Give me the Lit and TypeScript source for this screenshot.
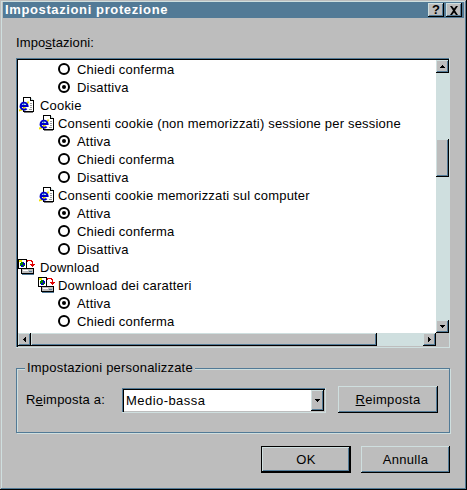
import { LitElement, html, css, svg } from "lit";
import { customElement } from "lit/decorators.js";

const ieIcon = svg`<svg class="ico" width="16" height="16" viewBox="0 0 16 16" shape-rendering="crispEdges">
  <path d="M5.500 .5H12.500L15.500 3.500V14.500H5.500Z" fill="#fff" stroke="#000"/>
  <path d="M12.500 .5V3.500H15.500" fill="#cfdfdf" stroke="#000"/>
  <path d="M12 6h2M12 8h2M12 10h2M11 12h3" stroke="#9a9a9a"/>
  <path d="M6 15.500H15" stroke="#7b7b7b"/>
  <g shape-rendering="auto">
    <path d="M1 13.500C3.500 13.500 8 10.500 10.500 4.500" fill="none" stroke="#f0e000" stroke-width="1.800"/>
    <path d="M3.200 9H9.600A3.500 3.500 0 1 0 8.600 11.600" fill="none" stroke="#0000c8" stroke-width="2"/>
    <path d="M4.500 7.200H7.500" stroke="#6fd0ff" stroke-width="1"/>
  </g>
</svg>`;

const dlIcon = svg`<svg class="ico dl" width="17" height="16" viewBox="0 0 17 16" shape-rendering="crispEdges">
  <rect x="0.500" y="0.500" width="8" height="9" fill="#fff" stroke="#000"/>
  <rect x="1" y="1" width="3" height="2" fill="#f0f000"/>
  <path d="M3 3h3v1h1v3H6v1H3V7H2V4h1z" fill="#008000"/>
  <path d="M5 3h1v1h1v2H5zM3 6h2v2H3z" fill="#0000c8"/>
  <path d="M9.500 3V1.500H13.500V2.500H14.500V5" fill="none" stroke="#e00000"/>
  <path d="M12 5h5v1h-1v1h-1v1h-1V7h-1V6h-1z" fill="#e00000"/>
  <rect x="3.500" y="9.500" width="12" height="5" fill="#bdbdbd" stroke="#000"/>
  <path d="M5 11h5v1H5z" fill="#fff"/>
  <path d="M11 12h3v1h-3z" fill="#527a96"/>
  <path d="M4 15h12v1H4z" fill="#527a96"/>
</svg>`;

type Row = { kind: "radio" | "ie" | "dl"; level: number; text: string; on?: boolean };
const rows: Row[] = [
  { kind: "radio", level: 2, text: "Chiedi conferma" },
  { kind: "radio", level: 2, text: "Disattiva", on: true },
  { kind: "ie", level: 0, text: "Cookie" },
  { kind: "ie", level: 1, text: "Consenti cookie (non memorizzati) sessione per sessione" },
  { kind: "radio", level: 2, text: "Attiva", on: true },
  { kind: "radio", level: 2, text: "Chiedi conferma" },
  { kind: "radio", level: 2, text: "Disattiva" },
  { kind: "ie", level: 1, text: "Consenti cookie memorizzati sul computer" },
  { kind: "radio", level: 2, text: "Attiva", on: true },
  { kind: "radio", level: 2, text: "Chiedi conferma" },
  { kind: "radio", level: 2, text: "Disattiva" },
  { kind: "dl", level: 0, text: "Download" },
  { kind: "dl", level: 1, text: "Download dei caratteri" },
  { kind: "radio", level: 2, text: "Attiva", on: true },
  { kind: "radio", level: 2, text: "Chiedi conferma" },
];

const arrow = (d: string) => svg`<svg width="5" height="5" viewBox="0 0 5 5"><path d=${d} fill="#000" shape-rendering="crispEdges"/></svg>`;
const UP = "M2 1h1v1h1v1h1v1H0V3h1V2h1z";
const DOWN = "M0 1h5v1H4v1H3v1H2V3H1V2H0z";
const LEFT = "M3 0h1v5H3V4H2V3H1V2h1V1h1z";
const RIGHT = "M1 0h1v1h1v1h1v1H3v1H2v1H1z";

@customElement("app-root")
export class AppRoot extends LitElement {
  static styles = css`
    :host {
      display: block;
      width: 467px;
      height: 490px;
      font-family: "Liberation Sans", Arial, sans-serif;
      font-size: 13px;
      color: #000;
    }
    .window {
      box-sizing: border-box;
      width: 467px;
      height: 490px;
      padding: 2px;
      background: #bdbdbd;
      display: flex;
      flex-direction: column;
      box-shadow: inset -1px -1px #000, inset 1px 1px #bdbdbd, inset -2px -2px #527a96, inset 2px 2px #cfdfdf;
    }
    .title {
      height: 16px;
      flex: none;
      margin: 0 1px;
      background: #527a96;
      display: flex;
      align-items: center;
      padding: 0 2px;
      gap: 2px;
    }
    .title b {
      flex: 1;
      color: #fff;
      font-size: 13px;
      letter-spacing: 0.62px;
      line-height: 16px;
    }
    .tbtn {
      box-sizing: border-box;
      width: 16px;
      height: 14px;
      background: #bdbdbd;
      box-shadow: inset -1px -1px #000, inset 1px 1px #cfdfdf, inset -2px -2px #527a96;
      display: flex;
      align-items: center;
      justify-content: center;
      font-weight: bold;
      font-size: 13px;
      line-height: 14px;
    }
    .body {
      flex: 1;
      display: flex;
      flex-direction: column;
      padding: 0 15px 0 14px;
    }
    .lbl {
      margin-top: 17px;
      height: 23px;
      line-height: 16px;
      flex: none;
      letter-spacing: 0.1px;
    }
    u { text-decoration: underline; text-underline-offset: 1px; }
    .list {
      box-sizing: border-box;
      height: 290px;
      flex: none;
      padding: 2px 1px 2px 2px;
      display: grid;
      grid-template-columns: 1fr 13px;
      grid-template-rows: 273px 13px;
      background: #bdbdbd;
      box-shadow: inset -1px -1px #cfdfdf, inset 1px 1px #527a96, inset 2px 2px #000;
    }
    .rows {
      background: #fff;
      overflow: hidden;
      min-width: 0;
    }
    .row {
      height: 18px;
      display: flex;
      align-items: center;
      white-space: nowrap;
      letter-spacing: 0.19px;
    }
    .l0 { padding-left: 0; gap: 6px; }
    .l1 { padding-left: 20px; gap: 4px; }
    .l2 { padding-left: 40px; gap: 7px; }
    .ico { flex: none; }
    .dl { margin-right: -1px; }
    .radio {
      box-sizing: border-box;
      flex: none;
      width: 12px;
      height: 12px;
      border: 2px solid #000;
      border-radius: 50%;
      background: #fff;
      display: flex;
      align-items: center;
      justify-content: center;
    }
    .radio.on::after {
      content: "";
      width: 4px;
      height: 4px;
      border-radius: 50%;
      background: #000;
    }
    .vbar {
      background: #cfdfdf;
      display: flex;
      flex-direction: column;
      justify-content: space-between;
      position: relative;
    }
    .sb {
      box-sizing: border-box;
      flex: none;
      background: #bdbdbd;
      box-shadow: inset -1px -1px #000, inset 1px 1px #cfdfdf, inset -2px -2px #527a96;
      display: flex;
      align-items: center;
      justify-content: center;
    }
    .sq { width: 13px; height: 13px; }
    .vthumb { position: absolute; left: 0; top: 79px; width: 13px; height: 38px; }
    .hbar {
      background: #cfdfdf;
      display: flex;
      justify-content: space-between;
    }
    .hthumb { width: 346px; height: 13px; }
    .hleft { display: flex; }
    .group {
      position: relative;
      box-sizing: border-box;
      flex: none;
      height: 65px;
      margin-top: 20px;
      border: 1px solid #527a96;
      box-shadow: inset 1px 1px #cfdfdf, 1px 1px #cfdfdf;
      padding: 18px 11px 0 9px;
      display: flex;
      align-items: flex-start;
    }
    .legend {
      position: absolute;
      left: 8px;
      top: -9px;
      padding: 0 2px;
      background: #bdbdbd;
      line-height: 16px;
      letter-spacing: 0.2px;
    }
    .glbl { width: 96px; margin-top: 5px; line-height: 16px; flex: none; letter-spacing: 0.2px; }
    .select {
      box-sizing: border-box;
      width: 204px;
      height: 25px;
      flex: none;
      margin-top: 1px;
      padding: 2px;
      display: flex;
      box-shadow: inset -1px -1px #cfdfdf, inset 1px 1px #527a96, inset 2px 2px #000;
      background: #bdbdbd;
    }
    .sval { flex: 1; background: #fff; line-height: 21px; padding-left: 2px; letter-spacing: 0.45px; }
    .sarrow { width: 13px; height: 21px; }
    .btn {
      box-sizing: border-box;
      background: #bdbdbd;
      display: flex;
      align-items: center;
      justify-content: center;
      box-shadow: inset -1px -1px #000, inset 1px 1px #cfdfdf, inset -2px -2px #527a96;
      letter-spacing: 0.3px;
    }
    .reset { width: 100px; height: 27px; margin-left: 12px; margin-top: -1px; }
    .foot {
      display: flex;
      justify-content: flex-end;
      gap: 10px;
      margin-top: 13px;
    }
    .foot .btn { height: 27px; }
    .ok {
      width: 90px;
      box-shadow: inset 0 0 0 1px #000, inset -2px -2px #000, inset 2px 2px #cfdfdf, inset -3px -3px #527a96;
    }
    .cancel { width: 89px; }
  `;

  render() {
    return html`<div class="window">
      <div class="title">
        <b>Impostazioni protezione</b>
        <div class="tbtn">?</div>
        <div class="tbtn">
          <svg width="10" height="9" viewBox="0 0 10 9"><path d="M1 0h2l2 2.500L7 0h2L6 4.500 9 9H7L5 6.500 3 9H1l3-4.500z" fill="#000"/></svg>
        </div>
      </div>
      <div class="body">
        <div class="lbl">Impo<u>s</u>tazioni:</div>
        <div class="list">
          <div class="rows">
            ${rows.map(
              (r) => html`<div class="row l${r.level}">
                ${r.kind === "radio"
                  ? html`<span class="radio ${r.on ? "on" : ""}"></span>`
                  : r.kind === "ie"
                  ? ieIcon
                  : dlIcon}
                <span>${r.text}</span>
              </div>`
            )}
          </div>
          <div class="vbar">
            <div class="sb sq">${arrow(UP)}</div>
            <div class="sb vthumb"></div>
            <div class="sb sq">${arrow(DOWN)}</div>
          </div>
          <div class="hbar">
            <div class="hleft">
              <div class="sb sq">${arrow(LEFT)}</div>
              <div class="sb hthumb"></div>
            </div>
            <div class="sb sq">${arrow(RIGHT)}</div>
          </div>
          <div></div>
        </div>
        <div class="group">
          <div class="legend">Impostazioni personalizzate</div>
          <div class="glbl">R<u>e</u>imposta a:</div>
          <div class="select">
            <div class="sval">Medio-bassa</div>
            <div class="sb sarrow">${arrow(DOWN)}</div>
          </div>
          <div class="btn reset"><span><u>R</u>eimposta</span></div>
        </div>
        <div class="foot">
          <div class="btn ok">OK</div>
          <div class="btn cancel">Annulla</div>
        </div>
      </div>
    </div>`;
  }
}
